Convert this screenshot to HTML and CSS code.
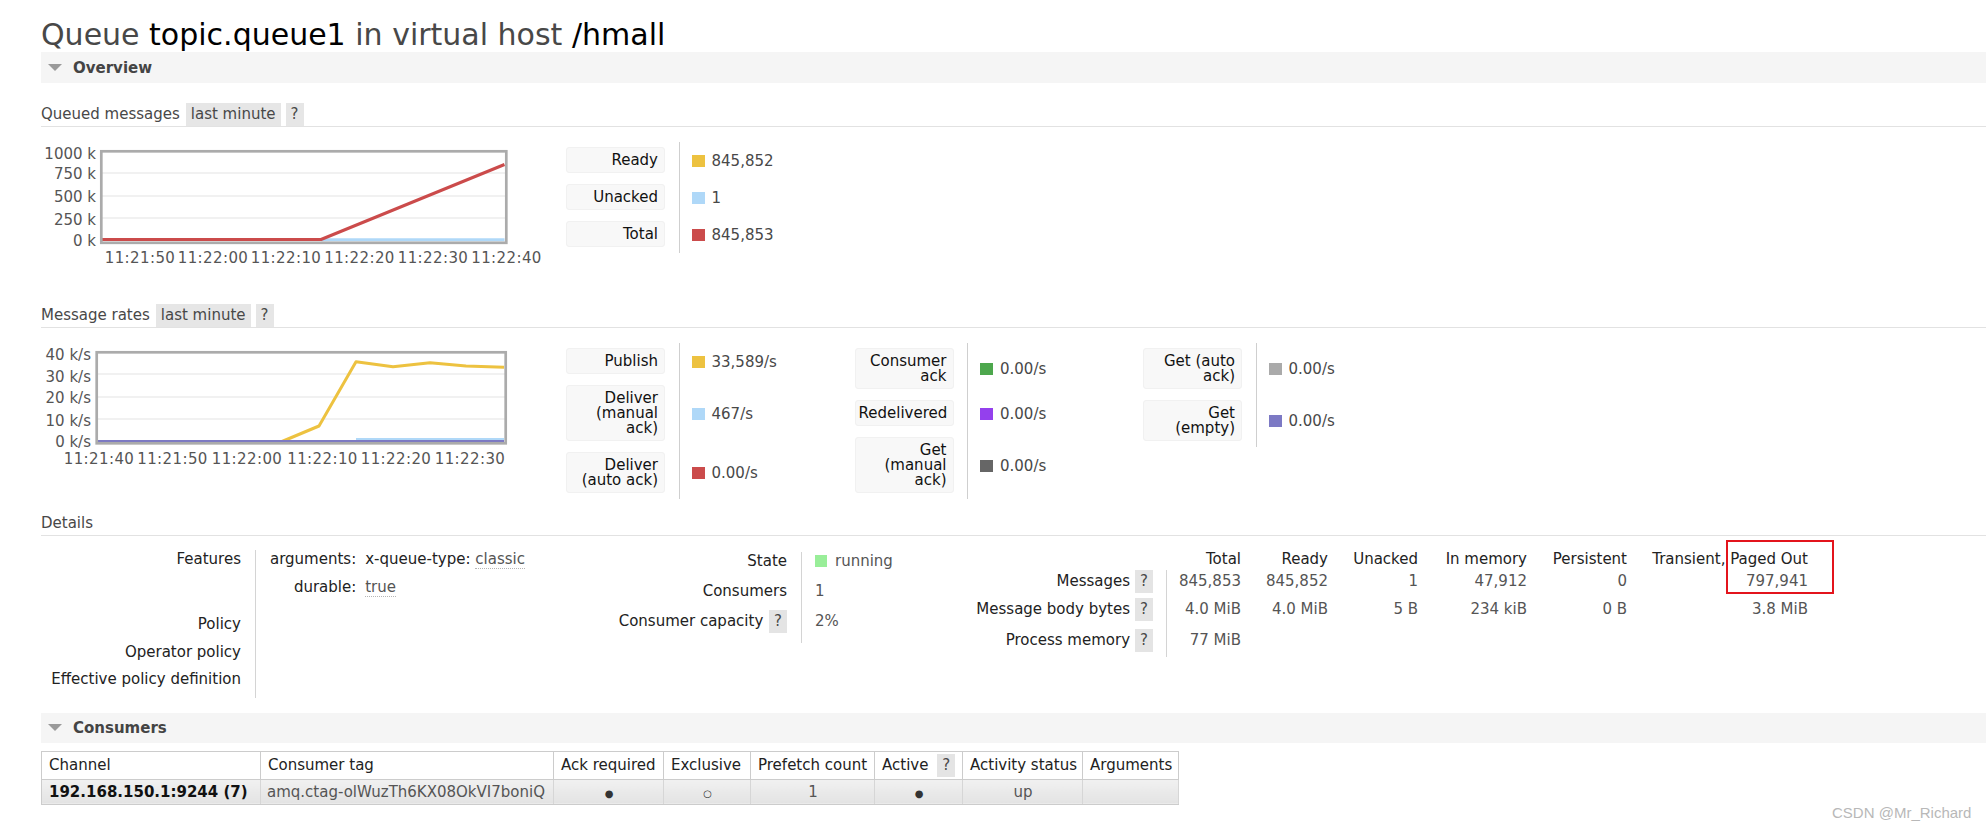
FILE: index.html
```html
<!DOCTYPE html>
<html>
<head>
<meta charset="utf-8">
<title>Queue topic.queue1</title>
<link rel="stylesheet" href="styles.css">
</head>
<body>
<div class="page">
  <h1 class="title"><span>Queue</span> <b>topic.queue1</b> <span>in virtual host</span> <b>/hmall</b></h1>

  <div class="section">
    <div class="sec-head"><span class="tri"></span>Overview</div>
    <div class="sec-body">
      <div class="subhead"><span class="subtitle">Queued messages</span><span class="tab">last minute</span><span class="tab">?</span></div>
      <div class="chart-row r1">
        <svg class="chart" width="525" height="135" viewBox="0 0 525 135">
          <g class="grid">
            <line x1="61" y1="33" x2="465" y2="33"/>
            <line x1="61" y1="56" x2="465" y2="56"/>
            <line x1="61" y1="78" x2="465" y2="78"/>
          </g>
          <polyline class="s-lblue" points="280,99.8 463.5,99.8"/>
          <polyline class="s-red" points="61,99.5 280,99.5 463.5,24.5"/>
          <rect class="frame" x="60.3" y="11.3" width="405" height="91.5"/>
          <g class="axis yl">
            <text x="55" y="18.5">1000 k</text>
            <text x="55" y="38.5">750 k</text>
            <text x="55" y="62">500 k</text>
            <text x="55" y="84.5">250 k</text>
            <text x="55" y="105.5">0 k</text>
          </g>
          <g class="axis xl">
            <text x="99" y="122.5">11:21:50</text>
            <text x="172" y="122.5">11:22:00</text>
            <text x="245" y="122.5">11:22:10</text>
            <text x="318.5" y="122.5">11:22:20</text>
            <text x="392" y="122.5">11:22:30</text>
            <text x="465.5" y="122.5">11:22:40</text>
          </g>
        </svg>
        <div class="legend">
          <div class="lgroup">
            <div class="lk"><div class="lbox">Ready</div></div>
            <div class="lv"><span class="sw c-yellow"></span>845,852</div>
            <div class="lk"><div class="lbox">Unacked</div></div>
            <div class="lv"><span class="sw c-lblue"></span>1</div>
            <div class="lk"><div class="lbox">Total</div></div>
            <div class="lv"><span class="sw c-red"></span>845,853</div>
          </div>
        </div>
      </div>

      <div class="subhead"><span class="subtitle">Message rates</span><span class="tab">last minute</span><span class="tab">?</span></div>
      <div class="chart-row r2">
        <svg class="chart" width="525" height="135" viewBox="0 0 525 135">
          <g class="grid">
            <line x1="57" y1="33" x2="464" y2="33"/>
            <line x1="57" y1="56" x2="464" y2="56"/>
            <line x1="57" y1="78" x2="464" y2="78"/>
          </g>
          <polyline class="s-yellow" points="56,100.5 241,100.5 278,85 315,20.7 352,25.7 389,21.7 425,25 463,26.3"/>
          <polyline class="s-lblue" points="315,98.5 463,98.5"/>
          <polyline class="s-violet" points="56,100.5 463,100.5"/>
          <rect class="frame" x="55.7" y="11.3" width="409" height="91"/>
          <g class="axis yl">
            <text x="50" y="18.5">40 k/s</text>
            <text x="50" y="40.5">30 k/s</text>
            <text x="50" y="61.5">20 k/s</text>
            <text x="50" y="84.5">10 k/s</text>
            <text x="50" y="106">0 k/s</text>
          </g>
          <g class="axis xl">
            <text x="58" y="122.5">11:21:40</text>
            <text x="131.5" y="122.5">11:21:50</text>
            <text x="206" y="122.5">11:22:00</text>
            <text x="281.5" y="122.5">11:22:10</text>
            <text x="355" y="122.5">11:22:20</text>
            <text x="429" y="122.5">11:22:30</text>
          </g>
        </svg>
        <div class="legend">
          <div class="lgroup">
            <div class="lk"><div class="lbox">Publish</div></div>
            <div class="lv"><span class="sw c-yellow"></span>33,589/s</div>
            <div class="lk"><div class="lbox">Deliver (manual ack)</div></div>
            <div class="lv"><span class="sw c-lblue"></span>467/s</div>
            <div class="lk"><div class="lbox">Deliver (auto ack)</div></div>
            <div class="lv"><span class="sw c-red"></span>0.00/s</div>
          </div>
          <div class="lgroup">
            <div class="lk"><div class="lbox">Consumer ack</div></div>
            <div class="lv"><span class="sw c-green"></span>0.00/s</div>
            <div class="lk"><div class="lbox">Redelivered</div></div>
            <div class="lv"><span class="sw c-purple"></span>0.00/s</div>
            <div class="lk"><div class="lbox">Get (manual ack)</div></div>
            <div class="lv"><span class="sw c-dgrey"></span>0.00/s</div>
          </div>
          <div class="lgroup">
            <div class="lk"><div class="lbox">Get (auto ack)</div></div>
            <div class="lv"><span class="sw c-grey"></span>0.00/s</div>
            <div class="lk"><div class="lbox">Get (empty)</div></div>
            <div class="lv"><span class="sw c-violet"></span>0.00/s</div>
          </div>
        </div>
      </div>

      <div class="subhead"><span class="subtitle">Details</span></div>
      <div class="details">
        <div class="facts facts-a">
          <div class="fth feat">Features</div>
          <div class="ftd feat">
            <div class="args">
              <span class="k">arguments:</span><span><span class="k">x-queue-type:</span> <span class="v">classic</span></span>
              <span class="k">durable:</span><span><span class="v">true</span></span>
            </div>
          </div>
          <div class="fth">Policy</div><div class="ftd"></div>
          <div class="fth">Operator policy</div><div class="ftd"></div>
          <div class="fth last">Effective policy definition</div><div class="ftd last"></div>
        </div>

        <div class="facts facts-b">
          <div class="fth">State</div><div class="ftd"><span class="sw c-run"></span>running</div>
          <div class="fth">Consumers</div><div class="ftd">1</div>
          <div class="fth">Consumer capacity <span class="help inl">?</span></div><div class="ftd">2%</div>
        </div>

        <div class="facts-c">
          <div class="ch"></div>
          <div class="ch">Total</div>
          <div class="ch">Ready</div>
          <div class="ch">Unacked</div>
          <div class="ch">In memory</div>
          <div class="ch">Persistent</div>
          <div class="ch">Transient, Paged Out</div>

          <div class="cth">Messages <span class="help">?</span></div>
          <div class="cv first">845,853</div>
          <div class="cv">845,852</div>
          <div class="cv">1</div>
          <div class="cv">47,912</div>
          <div class="cv">0</div>
          <div class="cv">797,941</div>

          <div class="cth tall">Message body bytes <span class="help">?</span></div>
          <div class="cv first tall">4.0 MiB</div>
          <div class="cv tall">4.0 MiB</div>
          <div class="cv tall">5 B</div>
          <div class="cv tall">234 kiB</div>
          <div class="cv tall">0 B</div>
          <div class="cv tall">3.8 MiB</div>

          <div class="cth">Process memory <span class="help">?</span></div>
          <div class="cv first">77 MiB</div>
          <div class="cv"></div>
          <div class="cv"></div>
          <div class="cv"></div>
          <div class="cv"></div>
          <div class="cv"></div>

          <div class="mark"></div>
        </div>
      </div>
    </div>
  </div>

  <div class="section consumers">
    <div class="sec-head"><span class="tri"></span>Consumers</div>
    <table class="list">
      <colgroup>
        <col class="w1"><col class="w2"><col class="w3"><col class="w4"><col class="w5"><col class="w6"><col class="w7"><col class="w8">
      </colgroup>
      <thead>
        <tr>
          <th>Channel</th>
          <th>Consumer tag</th>
          <th>Ack required</th>
          <th>Exclusive</th>
          <th>Prefetch count</th>
          <th>Active <span class="help">?</span></th>
          <th>Activity status</th>
          <th>Arguments</th>
        </tr>
      </thead>
      <tbody>
        <tr>
          <td class="chan">192.168.150.1:9244 (7)</td>
          <td class="tag">amq.ctag-olWuzTh6KX08OkVI7boniQ</td>
          <td class="c"><span class="dot">&#9679;</span></td>
          <td class="c"><span class="dot">&#9675;</span></td>
          <td class="c">1</td>
          <td class="c"><span class="dot">&#9679;</span></td>
          <td class="c">up</td>
          <td class="c"></td>
        </tr>
      </tbody>
    </table>
  </div>
</div>
<div class="watermark">CSDN @Mr_Richard</div>
</body>
</html>
```

FILE: styles.css
```css
html, body {
  margin: 0;
  padding: 0;
  background: #fff;
  overflow: hidden;
}

body {
  font-family: "DejaVu Sans", Verdana, sans-serif;
  font-size: 15px;
  color: #484848;
  width: 1986px;
  height: 830px;
  position: relative;
}

.page {
  padding: 17px 0 0 41px;
}

.title {
  margin: 0;
  font-size: 30px;
  font-weight: normal;
  line-height: 35px;
  height: 35px;
  color: #484848;
  white-space: nowrap;
}

.title b {
  font-weight: normal;
  color: #000;
}

.sec-head {
  height: 31px;
  background: #f5f5f5;
  display: flex;
  align-items: center;
  padding-left: 7px;
  font-weight: bold;
  color: #444;
}

.tri {
  width: 0;
  height: 0;
  border-left: 7px solid transparent;
  border-right: 7px solid transparent;
  border-top: 7px solid #9a9a9a;
  margin-right: 11px;
}

.sec-body {
  padding-top: 20px;
}

.subhead {
  display: flex;
  gap: 5px;
  height: 23px;
  line-height: 23px;
  border-bottom: 1px solid #e2e2e2;
}

.subtitle {
  margin-right: 1px;
}

.tab {
  background: #e6e6e6;
  padding: 0 5px;
}

.chart-row {
  display: flex;
  align-items: flex-start;
  padding-top: 13px;
  box-sizing: border-box;
}

.chart-row.r1 { height: 177px; }
.chart-row.r2 { height: 184px; }

.chart {
  display: block;
  flex: none;
}

.grid line {
  stroke: #ececec;
  stroke-width: 1.5;
}

.frame {
  fill: none;
  stroke: #ababab;
  stroke-width: 2.7;
}

.chart polyline {
  fill: none;
  stroke-width: 3;
  stroke-linejoin: round;
}

.s-red { stroke: #cb4b4b; }
.s-lblue { stroke: #afd8f8; }
.s-yellow { stroke: #edc240; }
.s-violet { stroke: #7c79c4; }

.axis text {
  font-family: "DejaVu Sans", Verdana, sans-serif;
  font-size: 15px;
  fill: #555;
}

.yl text { text-anchor: end; }
.xl text { text-anchor: middle; letter-spacing: 0.4px; }

.legend {
  display: flex;
  margin-top: 2px;
}

.lgroup {
  display: grid;
  grid-template-columns: 112.5px 176px;
  align-content: start;
}

.lk {
  padding: 5px 0 6px;
}

.lbox {
  width: 99px;
  box-sizing: border-box;
  padding: 5px 6px 4px 3px;
  background: #f8f8f8;
  border: 1px solid #f1f1f1;
  border-radius: 3px;
  text-align: right;
  line-height: 15px;
  color: #111;
}

.lv {
  border-left: 1px solid #cfcfcf;
  padding-left: 12px;
  display: flex;
  align-items: center;
}

.sw {
  display: inline-block;
  width: 13px;
  height: 12px;
  margin-right: 7px;
  flex: none;
}

.c-yellow { background: #edc240; }
.c-lblue { background: #afd8f8; }
.c-red { background: #cb4b4b; }
.c-green { background: #4da74d; }
.c-purple { background: #9440ed; }
.c-dgrey { background: #666666; }
.c-grey { background: #aaaaaa; }
.c-violet { background: #7c79c4; }
.c-run { background: #99ee99; width: 12px; }

/* Details */
.details {
  display: flex;
  align-items: flex-start;
  padding-top: 14px;
  line-height: 18px;
}

.facts {
  display: grid;
}

.facts-a {
  grid-template-columns: 214px 340px;
}

.facts-b {
  grid-template-columns: 206px 100px;
  padding-top: 2px;
}

.fth {
  text-align: right;
  padding-right: 14px;
  color: #222;
  padding-bottom: 10px;
  white-space: nowrap;
}

.ftd {
  border-left: 1px solid #d4d4d4;
  padding-left: 14px;
  padding-bottom: 10px;
  color: #555;
  display: flex;
  align-items: flex-start;
}

.facts-a .fth:nth-of-type(n) {
  padding-bottom: 9.5px;
}

.facts-a .feat {
  padding-bottom: 19px;
}

.facts-a .last {
  padding-bottom: 11px;
}

.facts-b .fth,
.facts-b .ftd {
  padding-bottom: 12px;
}

.facts-b .ftd {
  padding-left: 13px;
  align-items: center;
}

.facts-b .sw {
  margin-right: 8px;
}

.args {
  display: grid;
  grid-template-columns: auto auto;
  column-gap: 9px;
  row-gap: 10px;
}

.args .k {
  color: #222;
}

.args > .k {
  text-align: right;
}

.v {
  color: #555;
  border-bottom: 1px dotted #b5b5b5;
}

.help {
  display: inline-block;
  background: #e4e4e4;
  padding: 0 5px;
  height: 23px;
  line-height: 23px;
  color: #484848;
  vertical-align: middle;
}

.help.inl {
  margin: -3px 0 -2px 1px;
}

.facts-c {
  position: relative;
  display: grid;
  grid-template-columns: 265px 75px 87px 90px 109px 100px 181px;
}

.ch {
  text-align: right;
  color: #222;
  padding-bottom: 2px;
  white-space: nowrap;
}

.cth {
  display: flex;
  justify-content: flex-end;
  align-items: flex-start;
  gap: 5px;
  padding-right: 13px;
  color: #222;
  line-height: 23px;
  height: 28px;
  box-sizing: border-box;
  white-space: nowrap;
}

.cth .help {
  vertical-align: top;
}

.cv {
  text-align: right;
  line-height: 23px;
  height: 28px;
  box-sizing: border-box;
  color: #555;
  white-space: nowrap;
}

.cth.tall,
.cv.tall {
  height: 31px;
}

.cv.first {
  border-left: 1px solid #d4d4d4;
}

.mark {
  position: absolute;
  left: 825px;
  top: -10px;
  width: 108px;
  height: 54px;
  box-sizing: border-box;
  border: 2px solid #e3141c;
}

/* Consumers */
.consumers {
  margin-top: 15px;
}

.consumers .sec-head {
  height: 30px;
}

.list {
  margin-top: 8px;
  border-collapse: collapse;
  table-layout: fixed;
  width: 1137px;
  border: 1px solid #cccccc;
}

.w1 { width: 219px; }
.w2 { width: 293px; }
.w3 { width: 110px; }
.w4 { width: 87px; }
.w5 { width: 124px; }
.w6 { width: 88px; }
.w7 { width: 120px; }
.w8 { width: 96px; }

.list th {
  font-weight: normal;
  text-align: left;
  color: #222;
  height: 28px;
  padding: 0 6px 0 7px;
  border-right: 1px solid #cccccc;
  border-bottom: 1px solid #cccccc;
  background: #fff;
  white-space: nowrap;
  box-sizing: border-box;
}

.list th .help {
  margin-left: 4px;
}

.list td {
  height: 25px;
  padding: 0 6px 0 7px;
  background: linear-gradient(#f1f1f1, #e3e3e3);
  border-right: 1px solid #d6d6d6;
  border-bottom: 1px solid #cccccc;
  white-space: nowrap;
  overflow: hidden;
  box-sizing: border-box;
}

.list td.chan {
  font-weight: bold;
  color: #111;
}

.list td.tag {
  color: #555;
  padding-left: 6px;
}

.list td.c {
  text-align: center;
  color: #555;
}

.dot {
  font-size: 10px;
  color: #333;
}

.watermark {
  position: absolute;
  left: 1832px;
  top: 804px;
  font-family: "Liberation Sans", Arial, sans-serif;
  font-size: 15px;
  line-height: 18px;
  color: #b8b8b8;
  white-space: nowrap;
}
```
